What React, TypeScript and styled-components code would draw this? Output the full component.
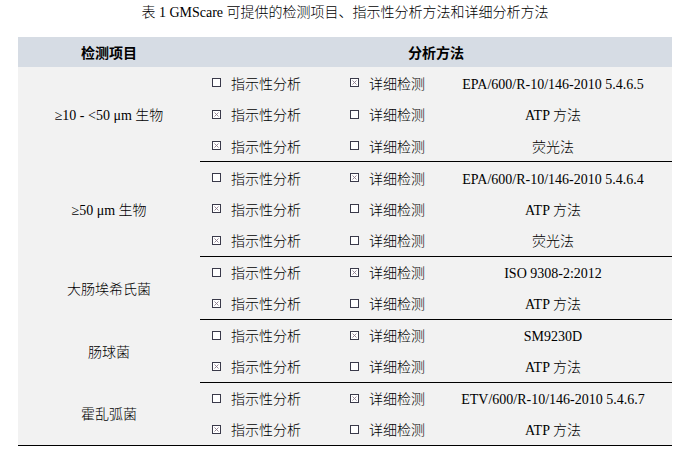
import React from 'react';
import styled, { createGlobalStyle } from 'styled-components';

interface Method {
  indicative: boolean;
  detailed: boolean;
  method: string;
}

interface Group {
  item: string;
  methods: Method[];
}

const groups: Group[] = [
  {
    item: '≥10 - <50 μm 生物',
    methods: [
      { indicative: false, detailed: true, method: 'EPA/600/R-10/146-2010 5.4.6.5' },
      { indicative: true, detailed: false, method: 'ATP 方法' },
      { indicative: true, detailed: false, method: '荧光法' },
    ],
  },
  {
    item: '≥50 μm 生物',
    methods: [
      { indicative: false, detailed: true, method: 'EPA/600/R-10/146-2010 5.4.6.4' },
      { indicative: true, detailed: false, method: 'ATP 方法' },
      { indicative: true, detailed: false, method: '荧光法' },
    ],
  },
  {
    item: '大肠埃希氏菌',
    methods: [
      { indicative: false, detailed: true, method: 'ISO 9308-2:2012' },
      { indicative: true, detailed: false, method: 'ATP 方法' },
    ],
  },
  {
    item: '肠球菌',
    methods: [
      { indicative: false, detailed: true, method: 'SM9230D' },
      { indicative: true, detailed: false, method: 'ATP 方法' },
    ],
  },
  {
    item: '霍乱弧菌',
    methods: [
      { indicative: false, detailed: true, method: 'ETV/600/R-10/146-2010 5.4.6.7' },
      { indicative: true, detailed: false, method: 'ATP 方法' },
    ],
  },
];

const GlobalStyle = createGlobalStyle`
  html, body {
    margin: 0;
    padding: 0;
    background: #ffffff;
  }
  body {
    font-family: 'Liberation Serif', 'Noto Sans CJK SC', serif;
    color: #000;
  }
`;

const Page = styled.div`
  width: 692px;
  padding: 4px 0 0 18px;
  box-sizing: border-box;
`;

const Caption = styled.div`
  width: 654px;
  text-align: center;
  font-size: 14px;
  font-weight: 300;
  line-height: 18px;
  margin-bottom: 15px;
`;

const Table = styled.table`
  width: 654px;
  border-collapse: collapse;
  table-layout: fixed;
  background: #f2f2f2;
  font-size: 14px;
  font-weight: 300;
  line-height: 20px;
`;

const HeadCell = styled.th`
  background: #d6dce4;
  height: 30px;
  padding: 0;
  font-weight: bold;
  font-size: 14px;
  text-align: center;
  font-family: 'Noto Sans CJK SC', sans-serif;
`;

const Row = styled.tr<{ $end: boolean }>`
  height: 31.5px;
  & > td.m {
    border-bottom: ${(p) => (p.$end ? '1px solid #000' : 'none')};
  }
`;

const ItemCell = styled.td<{ $last: boolean }>`
  text-align: center;
  vertical-align: middle;
  padding: 4px 0 0;
  border-bottom: ${(p) => (p.$last ? '1px solid #000' : 'none')};
`;

const CheckCell = styled.td<{ $pad: number }>`
  padding: 0 0 0 ${(p) => p.$pad}px;
  white-space: nowrap;
`;

const CheckLabel = styled.div`
  display: flex;
  align-items: center;
  gap: 10px;
  font-family: 'Noto Sans CJK SC', sans-serif;
  font-size: 14px;
`;

const MethodCell = styled.td`
  text-align: center;
  padding: 4px 0 0;
  white-space: nowrap;
`;

const Box = ({ checked }: { checked: boolean }) => (
  <svg width="9" height="9" viewBox="0 0 9 9">
    <rect x="0.5" y="0.5" width="8" height="8" fill="#fff" stroke="#3a3a4a" strokeWidth="1" />
    {checked && (
      <path d="M2.5 2.5 L6.5 6.5 M6.5 2.5 L2.5 6.5" stroke="#8a7a8a" strokeWidth="0.9" />
    )}
  </svg>
);

function App() {
  return (
    <>
      <GlobalStyle />
      <Page>
        <Caption>表 1 GMScare 可提供的检测项目、指示性分析方法和详细分析方法</Caption>
        <Table>
          <colgroup>
            <col style={{ width: 182 }} />
            <col style={{ width: 140 }} />
            <col style={{ width: 94 }} />
            <col style={{ width: 238 }} />
          </colgroup>
          <thead>
            <tr>
              <HeadCell>检测项目</HeadCell>
              <HeadCell colSpan={3}>分析方法</HeadCell>
            </tr>
          </thead>
          <tbody>
            {groups.map((g, gi) =>
              g.methods.map((m, mi) => (
                <Row key={`${gi}-${mi}`} $end={mi === g.methods.length - 1}>
                  {mi === 0 && (
                    <ItemCell rowSpan={g.methods.length} $last={gi === groups.length - 1}>
                      {g.item}
                    </ItemCell>
                  )}
                  <CheckCell className="m" $pad={12}>
                    <CheckLabel>
                      <Box checked={m.indicative} />
                      指示性分析
                    </CheckLabel>
                  </CheckCell>
                  <CheckCell className="m" $pad={10}>
                    <CheckLabel>
                      <Box checked={m.detailed} />
                      详细检测
                    </CheckLabel>
                  </CheckCell>
                  <MethodCell className="m">{m.method}</MethodCell>
                </Row>
              ))
            )}
          </tbody>
        </Table>
      </Page>
    </>
  );
}

export default App;
